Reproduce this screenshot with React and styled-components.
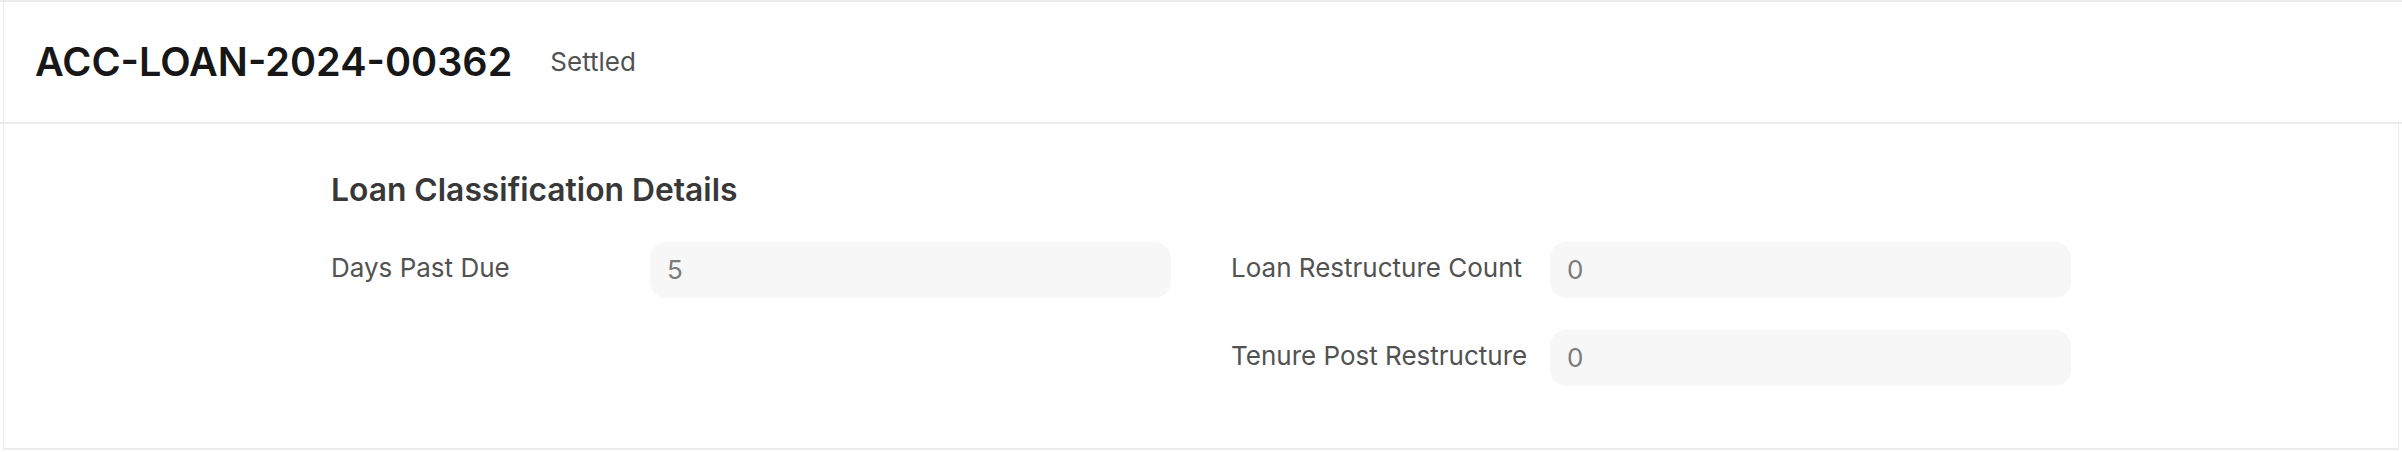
import React from 'react'
import styled, { createGlobalStyle } from 'styled-components'

const GlobalStyle = createGlobalStyle`
    html, body {
        margin: 0;
        padding: 0;
        background: #ffffff;
    }
    body {
        font-family: 'Inter', 'Noto Sans', sans-serif;
        color: #171717;
    }
`

const Page = styled.div`
    width: 2402px;
    height: 452px;
    overflow: hidden;
`

const Header = styled.header`
    border-top: 2px solid #ebebeb;
    border-bottom: 2px solid #ebebeb;
`

const HeaderInner = styled.div`
    margin-left: 3px;
    border-left: 1px solid #ebebeb;
    height: 120px;
    display: flex;
    align-items: center;
    gap: 38px;
    padding-left: 31px;
`

const Title = styled.h1`
    margin: 0;
    font-size: 39.6px;
    line-height: 48px;
    font-weight: 600;
    color: #171717;
`

const Status = styled.span`
    font-size: 26px;
    line-height: 32px;
    color: #525252;
`

const Body = styled.main`
    margin: 0 3px;
    border-left: 1px solid #ebebeb;
    border-right: 1px solid #ebebeb;
    border-bottom: 2px solid #ebebeb;
    padding: 46px 0 62px;
`

const Section = styled.section`
    width: 1740px;
    margin: 0 auto;
`

const SectionHead = styled.h2`
    margin: 0 0 32px;
    font-size: 31.8px;
    line-height: 40px;
    font-weight: 600;
    color: #383838;
`

const Columns = styled.div`
    display: grid;
    grid-template-columns: 840px 840px;
    column-gap: 60px;
    align-items: start;
`

const Column = styled.div`
    display: flex;
    flex-direction: column;
    gap: 32px;
`

const Row = styled.div`
    display: flex;
    align-items: center;
`

const Label = styled.label`
    width: 319px;
    flex-shrink: 0;
    font-size: 26px;
    line-height: 32px;
    padding-bottom: 5px;
    color: #525252;
`

const Value = styled.div`
    flex: 1;
    height: 56px;
    box-sizing: border-box;
    display: flex;
    align-items: center;
    padding: 0 17px;
    border-radius: 16px;
    background: #f7f7f7;
    font-size: 26px;
    line-height: 32px;
    color: #7c7c7c;
`

const Field = ({ label, value }) => (
    <Row>
        <Label>{label}</Label>
        <Value>{value}</Value>
    </Row>
)

const App = () => {
    return (
        <>
        <GlobalStyle />
        <Page>
            <Header>
                <HeaderInner>
                    <Title>ACC-LOAN-2024-00362</Title>
                    <Status>Settled</Status>
                </HeaderInner>
            </Header>
            <Body>
                <Section>
                    <SectionHead>Loan Classification Details</SectionHead>
                    <Columns>
                        <Column>
                            <Field label="Days Past Due" value="5" />
                        </Column>
                        <Column>
                            <Field label="Loan Restructure Count" value="0" />
                            <Field label="Tenure Post Restructure" value="0" />
                        </Column>
                    </Columns>
                </Section>
            </Body>
        </Page>
        </>
    )
}

export default App
